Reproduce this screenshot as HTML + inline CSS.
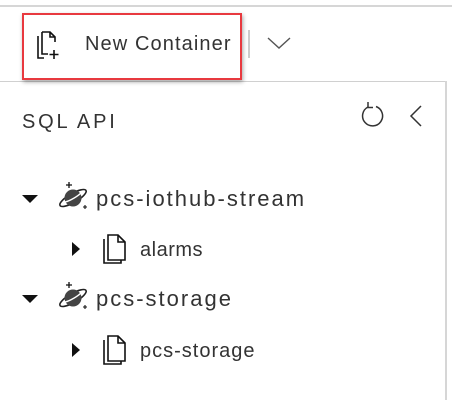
<!DOCTYPE html>
<html><head><style>
body{margin:0;width:452px;height:400px;background:#fff;position:relative;overflow:hidden;font-family:"Liberation Sans",sans-serif;color:#222}
.a{position:absolute}
.t{position:absolute;white-space:nowrap;line-height:1}
</style></head><body>
<div class="a" style="left:0;top:5px;width:452px;height:2px;background:#d6d6d6"></div>
<div class="a" style="left:0;top:81px;width:446px;height:1px;background:#d0d0d0"></div>
<div class="a" style="left:445px;top:81px;width:2px;height:319px;background:#d6d6d6"></div>
<div class="a" style="left:22px;top:13px;width:216px;height:63px;border:2px solid #e8393f;box-shadow:1px 2px 4px rgba(0,0,0,.35)"></div>
<svg class="a" style="left:34px;top:28px" width="34" height="34" viewBox="0 0 34 34" fill="none" stroke="#111" stroke-width="1.6">
<path d="M8 4H16L21 9V14"/><path d="M16 4V9H21"/><path d="M8 4V26H14"/>
<path d="M4 8V30H10"/><path d="M20 22V31M15.5 26.5H24.5"/>
</svg>
<div class="t" style="left:85px;top:34px;font-size:20px;letter-spacing:1.1px;color:#333">New Container</div>
<div class="a" style="left:248px;top:30px;width:2px;height:28px;background:#ccc"></div>
<svg class="a" style="left:266px;top:36px" width="26" height="14" viewBox="0 0 26 14" fill="none" stroke="#555" stroke-width="1.4"><path d="M2 2L13 12L24 2"/></svg>
<div class="t" style="left:22px;top:112px;font-size:20px;letter-spacing:2.8px;color:#333">SQL API</div>
<svg class="a" style="left:358px;top:101px" width="30" height="30" viewBox="0 0 30 30" fill="none" stroke="#333" stroke-width="1.5"><path d="M10 6A10 10 0 1 0 18 5.5"/><path d="M10 1V6.5H15"/></svg>
<svg class="a" style="left:408px;top:104px" width="16" height="24" viewBox="0 0 16 24" fill="none" stroke="#333" stroke-width="1.5"><path d="M13 2L3 12L13 22"/></svg>

<svg class="a" style="left:20px;top:193px" width="20" height="12"><path d="M2 2H18L10 10Z" fill="#111"/></svg>
<svg class="a" style="left:56px;top:181px" width="34" height="30" viewBox="0 0 34 30">
<ellipse cx="17" cy="17" rx="15" ry="4.5" transform="rotate(-30 17 17)" fill="none" stroke="#222" stroke-width="1.6"/>
<circle cx="17" cy="17" r="8.5" fill="#444"/>
<path d="M9 21C14 20 22 15 25 12" stroke="#fff" stroke-width="1.4" fill="none"/>
<path d="M13 1V7M10 4H16" stroke="#111" stroke-width="1.3"/>
<path d="M29 24V28M27 26H31" stroke="#111" stroke-width="1.1"/>
</svg>
<div class="t" style="left:96px;top:188px;font-size:22px;letter-spacing:2px;color:#333">pcs-iothub-stream</div>
<svg class="a" style="left:70px;top:240px" width="12" height="18"><path d="M2 2L10 9L2 16Z" fill="#111"/></svg>
<svg class="a" style="left:100px;top:232px" width="30" height="32" viewBox="0 0 30 32" fill="none" stroke="#111" stroke-width="1.6">
<path d="M8 3H18L25 10V28H8Z"/><path d="M18 3V10H25"/><path d="M4 7V31H21V28"/>
</svg>
<div class="t" style="left:140px;top:240px;font-size:20px;letter-spacing:0.5px;color:#333">alarms</div>

<svg class="a" style="left:20px;top:293px" width="20" height="12"><path d="M2 2H18L10 10Z" fill="#111"/></svg>
<svg class="a" style="left:56px;top:281px" width="34" height="30" viewBox="0 0 34 30">
<ellipse cx="17" cy="17" rx="15" ry="4.5" transform="rotate(-30 17 17)" fill="none" stroke="#222" stroke-width="1.6"/>
<circle cx="17" cy="17" r="8.5" fill="#444"/>
<path d="M9 21C14 20 22 15 25 12" stroke="#fff" stroke-width="1.4" fill="none"/>
<path d="M13 1V7M10 4H16" stroke="#111" stroke-width="1.3"/>
<path d="M29 24V28M27 26H31" stroke="#111" stroke-width="1.1"/>
</svg>
<div class="t" style="left:96px;top:288px;font-size:22px;letter-spacing:2px;color:#333">pcs-storage</div>
<svg class="a" style="left:70px;top:341px" width="12" height="18"><path d="M2 2L10 9L2 16Z" fill="#111"/></svg>
<svg class="a" style="left:100px;top:333px" width="30" height="32" viewBox="0 0 30 32" fill="none" stroke="#111" stroke-width="1.6">
<path d="M8 3H18L25 10V28H8Z"/><path d="M18 3V10H25"/><path d="M4 7V31H21V28"/>
</svg>
<div class="t" style="left:140px;top:341px;font-size:20px;letter-spacing:1px;color:#333">pcs-storage</div>
</body></html>
